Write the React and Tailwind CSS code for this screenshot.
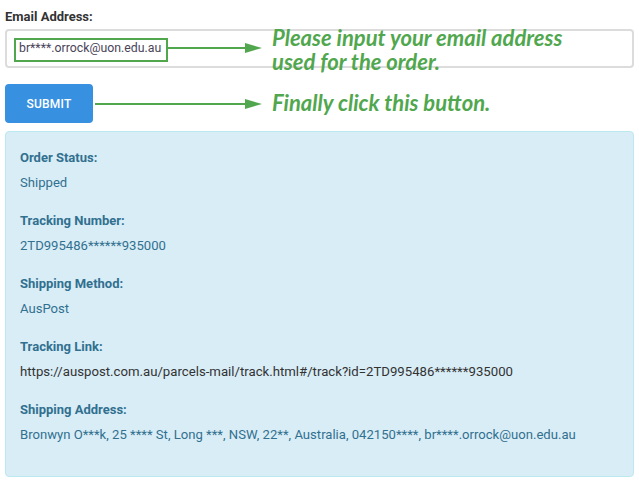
import React from "react";

const details = [
  { label: "Order Status:", value: "Shipped" },
  { label: "Tracking Number:", value: "2TD995486******935000" },
  { label: "Shipping Method:", value: "AusPost" },
  {
    label: "Tracking Link:",
    value: "https://auspost.com.au/parcels-mail/track.html#/track?id=2TD995486******935000",
    link: true,
  },
  {
    label: "Shipping Address:",
    value: "Bronwyn O***k, 25 **** St, Long ***, NSW, 22**, Australia, 042150****, br****.orrock@uon.edu.au",
  },
];

const Arrow = ({ x1, x2, y }) => (
  <svg
    className="absolute left-0 top-0 pointer-events-none"
    width="639"
    height="483"
    viewBox="0 0 639 483"
  >
    <line x1={x1} y1={y} x2={x2 - 14} y2={y} stroke="#51a74e" strokeWidth="2" />
    <polygon points={`${x2 - 17},${y - 5} ${x2},${y} ${x2 - 17},${y + 5}`} fill="#51a74e" />
  </svg>
);

const App = () => {
  return (
    <div className="relative w-[639px] h-[483px] bg-white px-[5px] font-['Roboto',sans-serif] overflow-hidden">
      <div className="pt-[8px] mb-[4px] text-[13px] leading-[17px] font-bold text-[#333]">
        Email Address:
      </div>
      <div className="h-[39px] w-full border-2 border-[#dcdcdc] rounded-[4px] flex items-center pl-[12px] text-[12.3px] text-[#4a4458]">
        br****.orrock@uon.edu.au
      </div>
      <button className="mt-[16px] h-[39px] w-[88px] rounded-[4px] bg-[#3790e0] text-white text-[12px] font-medium tracking-[0.2px]">
        SUBMIT
      </button>
      <div className="mt-[8px] h-[346px] rounded-[4px] border border-[#bce8f1] bg-[#d9edf7] px-[14px] pt-[17px]">
        {details.map((item) => (
          <div key={item.label} className="mb-[20px] text-[13px] leading-[18px]">
            <div className="font-bold text-[#31708f]">{item.label}</div>
            <div
              className={`mt-[7px] ${
                item.link ? "text-[13.2px] text-[#333]" : "text-[13.1px] text-[#31708f]"
              }`}
            >
              {item.value}
            </div>
          </div>
        ))}
      </div>

      {/* annotations drawn over the form */}
      <div className="absolute left-[14px] top-[38px] w-[154px] h-[24px] border-2 border-[#51a74e]" />
      <Arrow x1={168} x2={262} y={48} />
      <Arrow x1={95} x2={262} y={104} />
      <div className="absolute left-[272px] top-[26px] font-['Lato',sans-serif] italic font-bold text-[22px] leading-[24px] text-[#51a74e]">
        <div>Please input your email address</div>
        <div>used for the order.</div>
      </div>
      <div className="absolute left-[272px] top-[91px] font-['Lato',sans-serif] italic font-bold text-[22px] leading-[24px] text-[#51a74e]">
        Finally click this button.
      </div>
    </div>
  );
};

export default App;
